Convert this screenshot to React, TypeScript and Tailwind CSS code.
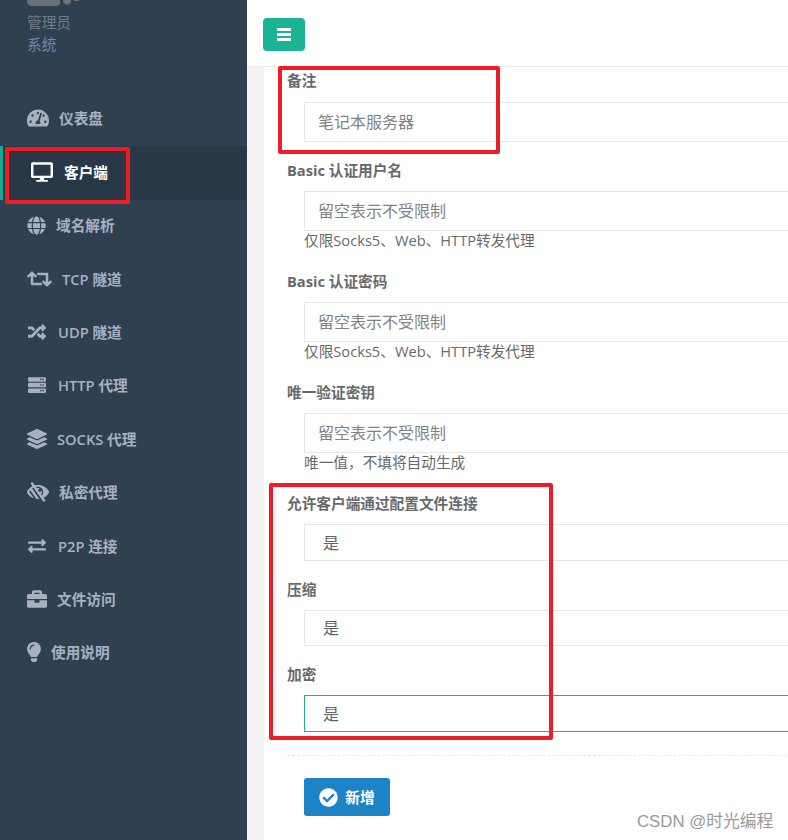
import type { ReactNode } from "react";
import type { IconType } from "react-icons";
import {
  FaBriefcase,
  FaCheckCircle,
  FaDesktop,
  FaExchangeAlt,
  FaGlobe,
  FaLayerGroup,
  FaLightbulb,
  FaLowVision,
  FaRandom,
  FaRetweet,
  FaServer,
  FaTachometerAlt,
} from "react-icons/fa";

interface NavItem {
  label: string;
  icon: IconType;
  iconClass: string;
  gapClass: string;
  active?: boolean;
}

const navItems: NavItem[] = [
  { label: "仪表盘", icon: FaTachometerAlt, iconClass: "w-[22px] h-[22px]", gapClass: "gap-[10px]" },
  { label: "客户端", icon: FaDesktop, iconClass: "w-[22px] h-[22px]", gapClass: "gap-[11px]", active: true },
  { label: "域名解析", icon: FaGlobe, iconClass: "w-[19px] h-[19px]", gapClass: "gap-[10px]" },
  { label: "TCP 隧道", icon: FaRetweet, iconClass: "w-[25px] h-[20px]", gapClass: "gap-[10px]" },
  { label: "UDP 隧道", icon: FaRandom, iconClass: "w-[20px] h-[18px]", gapClass: "gap-[11px]" },
  { label: "HTTP 代理", icon: FaServer, iconClass: "w-[20px] h-[18px]", gapClass: "gap-[11px]" },
  { label: "SOCKS 代理", icon: FaLayerGroup, iconClass: "w-[20px] h-[20px]", gapClass: "gap-[10px]" },
  { label: "私密代理", icon: FaLowVision, iconClass: "w-[22px] h-[20px]", gapClass: "gap-[10px]" },
  { label: "P2P 连接", icon: FaExchangeAlt, iconClass: "w-[20px] h-[18px]", gapClass: "gap-[11px]" },
  { label: "文件访问", icon: FaBriefcase, iconClass: "w-[20px] h-[20px]", gapClass: "gap-[10px]" },
  { label: "使用说明", icon: FaLightbulb, iconClass: "w-[14px] h-[20px]", gapClass: "gap-[10px]" },
];

function Sidebar() {
  return (
    <aside className="w-[247px] shrink-0 bg-[#2f4050]">
      {/* cut-off avatar + user block */}
      <div className="h-[91.6px] pl-[27px]">
        <svg className="block h-[6px] w-[54px]" viewBox="0 0 54 6">
          <path d="M0 0h33v4q-2 2-4 2H5Q1 6 0 2z" fill="#6b7177" />
          <path d="M36 0h8v2q-2 3-4 3t-4-3z" fill="#6b7177" />
          <path d="M47 0h5v1h-5z" fill="#6b7177" />
        </svg>
        <div className="mt-[6px] text-[14.67px] leading-5 text-[#6f7b87]">管理员</div>
        <div className="mt-[2px] text-[14.67px] leading-5 text-[#6d8bab]">系统</div>
      </div>
      <nav>
        {navItems.map((item) => {
          const Icon = item.icon;
          return (
            <div
              key={item.label}
              className={
                item.active
                  ? `mt-[0.6px] -mb-[1.1px] flex h-[54px] items-center border-l-[3px] border-[#19aa8d] bg-[#293846] pb-[2px] pl-[28px] ${item.gapClass} font-semibold text-white`
                  : `flex h-[53.4px] items-center pl-[27px] ${item.gapClass} font-semibold text-[#a7b1c2]`
              }
            >
              <Icon className={item.iconClass} />
              <span className="text-[14.67px]">{item.label}</span>
            </div>
          );
        })}
      </nav>
    </aside>
  );
}

function Label({ children }: { children: ReactNode }) {
  return <div className="h-5 text-[14.67px] font-bold leading-[18px] text-[#676a6c]">{children}</div>;
}

function Field({ label, value, help, className }: { label: string; value: string; help?: string; className: string }) {
  return (
    <div className={className}>
      <Label>{label}</Label>
      <div className="ml-[17px] mt-[10px] flex h-10 w-[600px] items-center border border-[#e5e6e7] pl-[13px] text-[16px] text-[#808386]">
        {value}
      </div>
      {help && <div className="ml-[17px] h-5 text-[14.67px] leading-[18px] text-[#676a6c]">{help}</div>}
    </div>
  );
}

function SelectField({ label, heightClass, focused, className }: { label: string; heightClass: string; focused?: boolean; className: string }) {
  return (
    <div className={className}>
      <Label>{label}</Label>
      <div
        className={`ml-[17px] mt-[10px] flex ${heightClass} w-[600px] items-center border pl-[18px] text-[16px] text-[#606366] ${
          focused ? "border-[#1ab394]" : "border-[#e5e6e7]"
        }`}
      >
        是
      </div>
    </div>
  );
}

export default function App() {
  return (
    <div
      className="relative flex h-[840px] w-[788px] overflow-hidden bg-white"
      style={{ fontFamily: '"Open Sans", "Noto Sans CJK SC", sans-serif' }}
    >
      <Sidebar />
      <div className="flex min-w-0 flex-1 flex-col bg-[#f3f3f4]">
        <header className="h-[67px] shrink-0 border-b border-[#e7eaec] bg-white pl-[16px] pt-[18px]">
          <button className="flex h-[33px] w-[42px] items-center justify-center rounded-[4px] bg-[#1ab394]">
            <svg className="h-[13px] w-[14px]" viewBox="0 0 14 13">
              <path d="M0 0h14v3H0zM0 5h14v3H0zM0 10h14v3H0z" fill="#fff" />
            </svg>
          </button>
        </header>
        <main className="ml-[17px] flex-1 bg-white pl-[23px] pt-[4px]">
          <Field label="备注" value="笔记本服务器" className="[&>div:nth-child(2)]:mt-[11px]" />
          <Field label="Basic 认证用户名" value="留空表示不受限制" help="仅限Socks5、Web、HTTP转发代理" className="mt-[19px]" />
          <Field label="Basic 认证密码" value="留空表示不受限制" help="仅限Socks5、Web、HTTP转发代理" className="mt-[21px]" />
          <Field label="唯一验证密钥" value="留空表示不受限制" help="唯一值，不填将自动生成" className="mt-[21px]" />
          <SelectField label="允许客户端通过配置文件连接" heightClass="h-[37px]" className="mt-[21px]" />
          <SelectField label="压缩" heightClass="h-[36px]" className="mt-[19px]" />
          <SelectField label="加密" heightClass="h-[37px]" focused className="mt-[19px]" />
          <div className="mt-[23px] w-[600px] border-t border-dashed border-[#e7eaec]" />
          <button className="ml-[17px] mt-[22px] flex h-[38px] w-[86px] items-center justify-center gap-[7px] rounded-[3px] bg-[#1c84c6] text-[14.67px] font-semibold text-white">
            <FaCheckCircle className="h-[19px] w-[19px]" />
            新增
          </button>
        </main>
      </div>

      {/* screenshot annotations */}
      <div className="absolute left-[5px] top-[147px] h-[57px] w-[125px] rounded-[2px] border-[4px] border-[#ee1c25]" />
      <div className="absolute left-[278px] top-[66px] h-[88px] w-[222px] rounded-[2px] border-[4px] border-[#ee1c25]" />
      <div className="absolute left-[269px] top-[483px] h-[257px] w-[284px] rounded-[2px] border-[4px] border-[#ee1c25]" />
      <div
        className="absolute left-[637px] top-[812px] text-[16.8px] leading-5 text-[#9a9a9a]"
        style={{ fontFamily: '"Liberation Sans", "Noto Sans CJK SC", sans-serif' }}
      >
        CSDN @时光编程
      </div>
    </div>
  );
}
